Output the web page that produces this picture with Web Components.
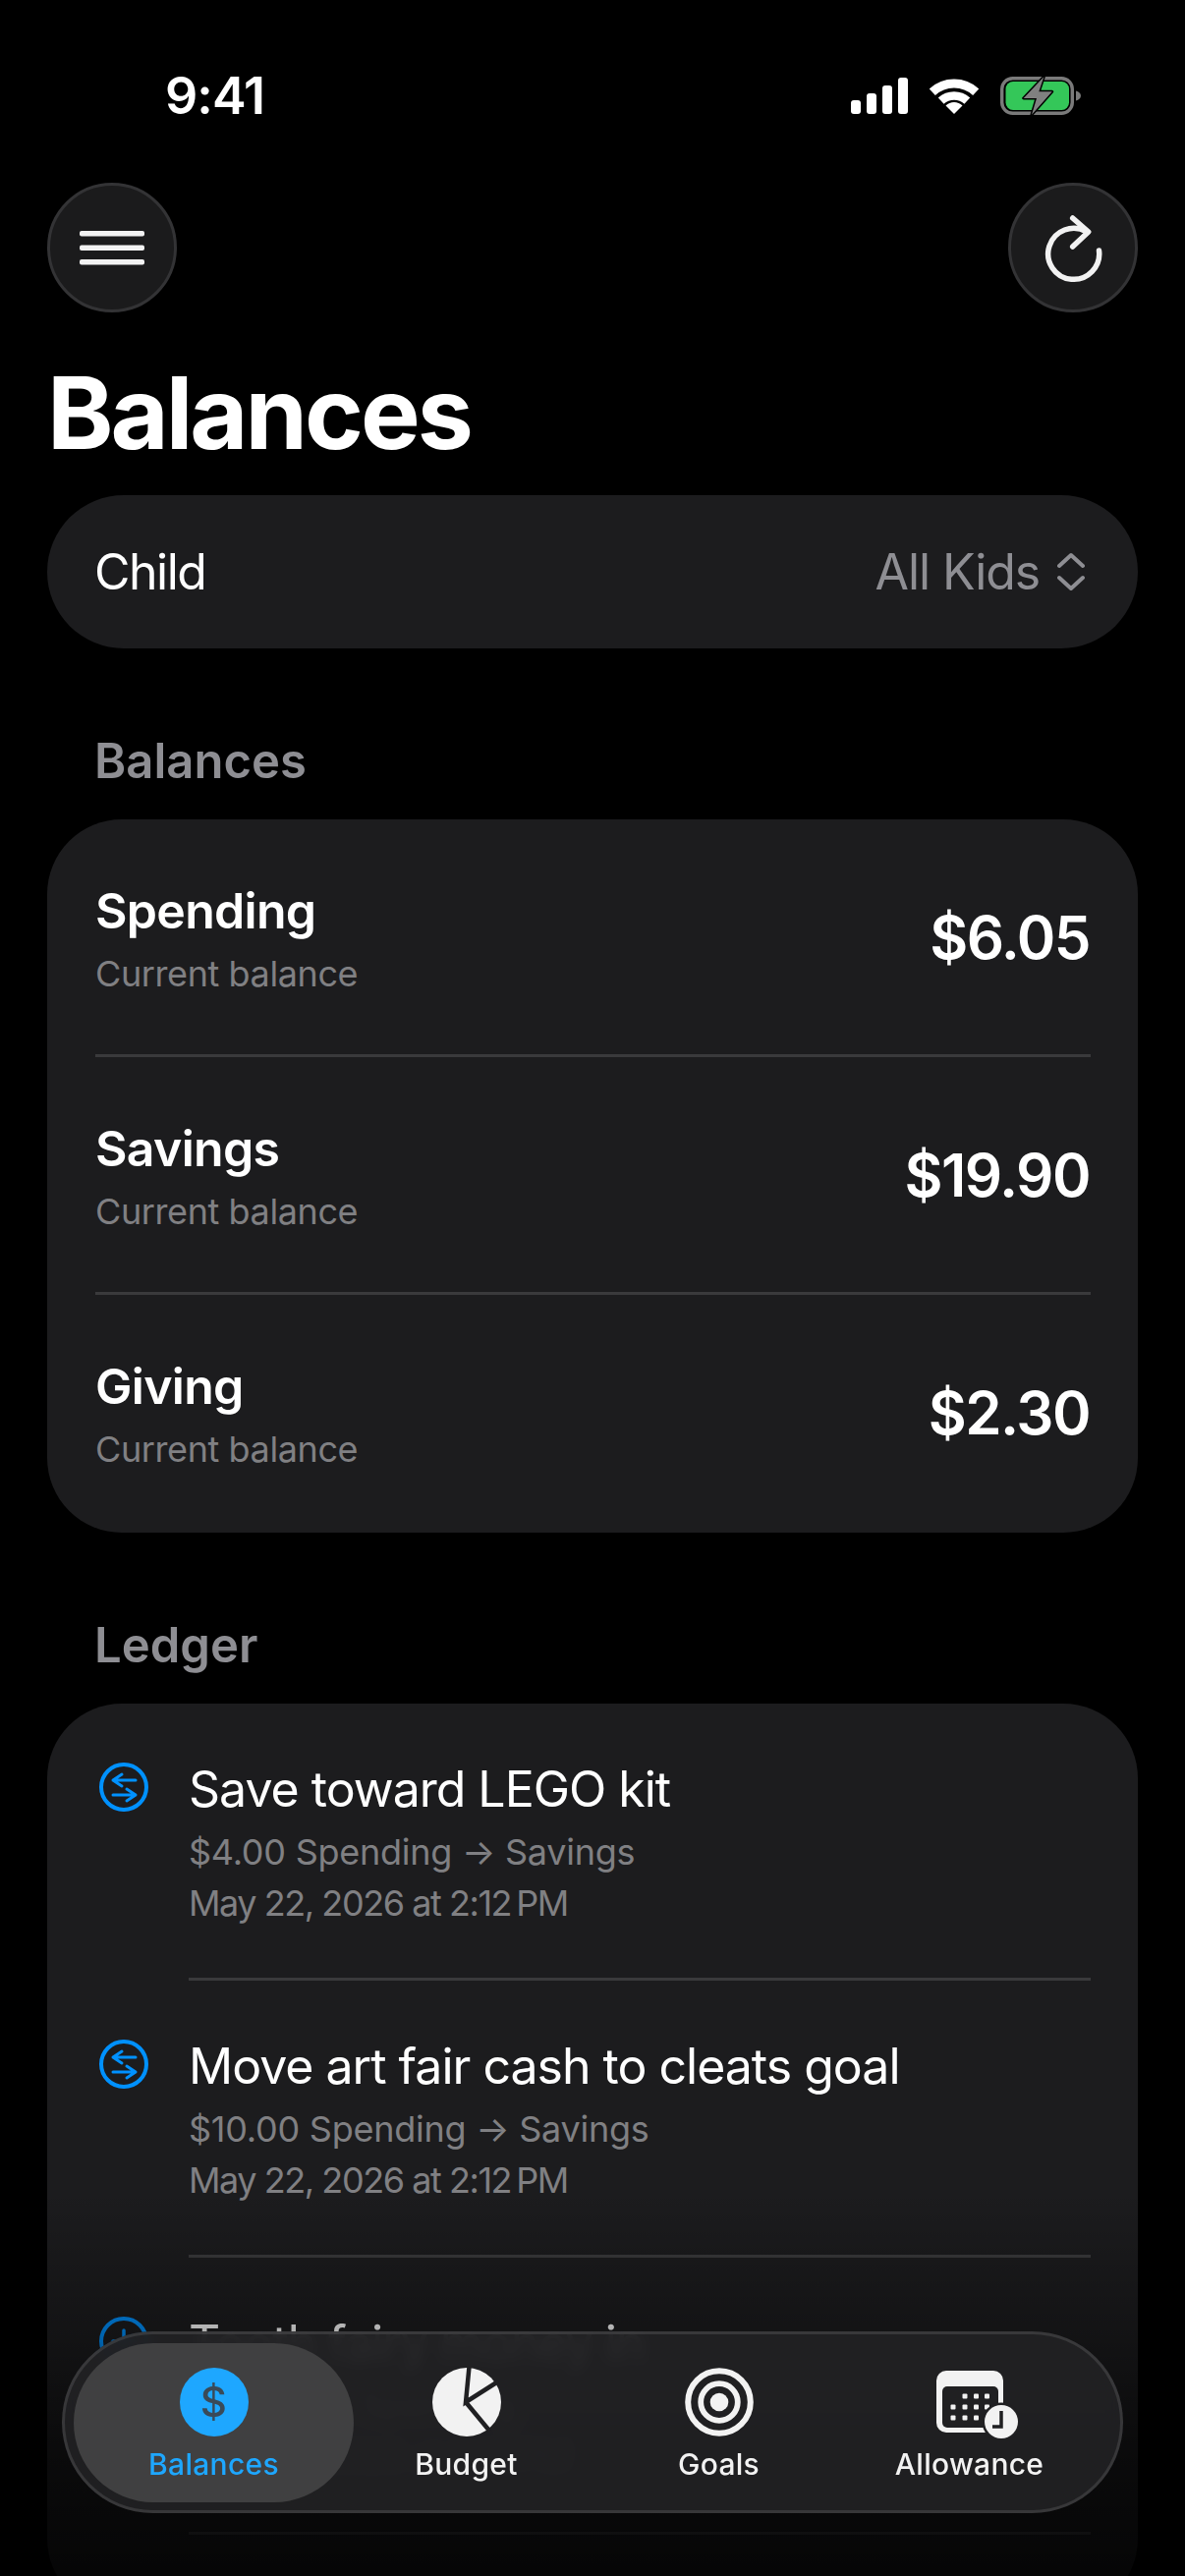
<!doctype html>
<html lang="en"><head><meta charset="utf-8"><title>Balances</title>
<style>
html,body{margin:0;background:#000}
body{font-family:Inter,"Liberation Sans",sans-serif;color:#fff}
svg{display:block}
</style></head><body>
<app-shell>
  <status-bar time="9:41">
    <span slot="time">9:41</span>
    <svg slot="icons" width="58" height="38" viewBox="0 0 58 38" fill="#fff" style="margin-top:1px"><rect x="0" y="23" width="10" height="14" rx="3"/><rect x="16" y="16" width="10" height="21" rx="3"/><rect x="32" y="8" width="10" height="29" rx="3"/><rect x="48" y="0" width="10" height="37" rx="3"/></svg>
    <svg slot="icons" width="50" height="38" viewBox="0 0 50 38" fill="none" stroke="#fff" style="margin-top:1px"><path d="M2.8 14.8A32.5 32.5 0 0 1 47.2 14.8" stroke-width="9"/><path d="M11.7 23.7A19.5 19.5 0 0 1 38.3 23.7" stroke-width="8.5"/><path d="M25 37 16.5 28.5A12 12 0 0 1 33.5 28.5Z" fill="#fff" stroke="none"/></svg>
    <svg slot="icons" width="82" height="40" viewBox="0 0 82 40"><rect x="1.7" y="1.7" width="71.6" height="35.6" rx="11" fill="none" stroke="#7a7a7a" stroke-width="3.4"/><rect x="5.5" y="5" width="64.500" height="29" rx="7.500" fill="#34c759"/><path d="M77 14.500C80 15.500 82 17 82 19.500S80 23.500 77 24.500Z" fill="#7a7a7a"/><path d="M44.300 .3 23.700 22H37L32 38.700 52.700 15.300H39.300Z" fill="#808080" stroke="#000" stroke-width="3" stroke-linejoin="round" paint-order="stroke"/></svg>
  </status-bar>
  <top-nav>
    <circle-button slot="left"><svg width="66" height="36" viewBox="0 0 66 36" fill="#f2f2f2"><rect x="0" y="1" width="66" height="5.500" rx="2"/><rect x="0" y="15.500" width="66" height="5.500" rx="2"/><rect x="0" y="30" width="66" height="5.500" rx="2"/></svg></circle-button>
    <circle-button slot="right"><svg width="126" height="126" viewBox="1 0 126 126" fill="none" stroke="#f2f2f2" stroke-width="5.500" stroke-linecap="round" stroke-linejoin="round"><path d="M90.500 66A26 26 0 1 1 78 47"/><path d="M63.700 33 79.700 47 63.700 62"/></svg></circle-button>
  </top-nav>
  <page-title>Balances</page-title>
  <picker-row>
    <span slot="label">Child</span>
    <span slot="value">All Kids</span>
    <svg slot="icon" width="28" height="40" viewBox="0 0 28 40" fill="none" stroke="#8e8e93" stroke-width="4" stroke-linecap="round" stroke-linejoin="round"><path d="M2 14 14 3 26 14"/><path d="M2 26 14 37 26 26"/></svg>
  </picker-row>
  <section-label>Balances</section-label>
  <group-card>
    <balance-row><span slot="name">Spending</span><span slot="note">Current balance</span><span slot="amount">$6.05</span></balance-row>
    <balance-row><span slot="name">Savings</span><span slot="note">Current balance</span><span slot="amount">$19.90</span></balance-row>
    <balance-row last><span slot="name">Giving</span><span slot="note">Current balance</span><span slot="amount">$2.30</span></balance-row>
  </group-card>
  <section-label>Ledger</section-label>
  <group-card tall>
    <ledger-row>
      <svg slot="icon" width="52" height="52" viewBox="0 0 52 52" fill="none" stroke="#0091ff" stroke-linecap="round" stroke-linejoin="round"><circle cx="26" cy="26" r="23" stroke-width="4"/><path d="M38 19H15M24 13 15 19 24 25" stroke-width="3"/><path d="M15 34H38M29 28 38 34 29 40" stroke-width="3"/></svg>
      <span slot="title">Save toward LEGO kit</span><span slot="sub">$4.00 Spending → Savings</span><span slot="date">May 22, 2026 at 2:12&#8239;PM</span>
    </ledger-row>
    <ledger-row>
      <svg slot="icon" width="52" height="52" viewBox="0 0 52 52" fill="none" stroke="#0091ff" stroke-linecap="round" stroke-linejoin="round"><circle cx="26" cy="26" r="23" stroke-width="4"/><path d="M38 19H15M24 13 15 19 24 25" stroke-width="3"/><path d="M15 34H38M29 28 38 34 29 40" stroke-width="3"/></svg>
      <span slot="title">Move art fair cash to cleats goal</span><span slot="sub">$10.00 Spending → Savings</span><span slot="date">May 22, 2026 at 2:12&#8239;PM</span>
    </ledger-row>
    <ledger-row>
      <svg slot="icon" width="52" height="52" viewBox="0 0 52 52" fill="none" stroke="#0091ff" stroke-linecap="round"><circle cx="26" cy="26" r="23" stroke-width="4"/><path d="M26 15V37M15 26H37" stroke-width="3.500"/></svg>
      <span slot="title">Tooth fairy money in</span><span slot="sub">+$2.00 to Spending</span><span slot="date">May 22, 2026 at 2:12&#8239;PM</span>
    </ledger-row>
  </group-card>
  <fade-veil></fade-veil>
  <tab-bar>
    <tab-item active>
      <span slot="icon" class="dollar" style="width:70px;height:70px;border-radius:50%;background:#1ea7ff;color:#3a4a58;display:flex;align-items:center;justify-content:center;font-size:42px;line-height:70px">$</span>
      Balances
    </tab-item>
    <tab-item>
      <svg slot="icon" width="70" height="70" viewBox="0 0 70 70"><circle cx="35" cy="35" r="35" fill="#f2f2f2"/><path d="M37.500 -1 34 35 67 14M34 35 58 64" fill="none" stroke="#202022" stroke-width="4.500"/></svg>
      Budget
    </tab-item>
    <tab-item>
      <svg slot="icon" width="70" height="70" viewBox="0 0 70 70" fill="none" stroke="#f2f2f2"><circle cx="35" cy="35" r="31.800" stroke-width="6"/><circle cx="35" cy="35" r="18.800" stroke-width="5.800"/><circle cx="35" cy="35" r="9.300" fill="#f2f2f2" stroke="none"/></svg>
      Goals
    </tab-item>
    <tab-item offset>
      <svg slot="icon" width="84" height="74" viewBox="0 0 84 74" style="margin-left:17px;margin-bottom:-4px"><rect x="0" y="3" width="68" height="63" rx="10" fill="#f2f2f2"/><path d="M11 19H58A5 5 0 0 1 63 24V56A5 5 0 0 1 58 61H11A5 5 0 0 1 6 56V24A5 5 0 0 1 11 19Z" fill="#202022"/><g fill="#f2f2f2"><rect x="26.500" y="26.500" width="5" height="5" rx="1"/><rect x="38" y="26.500" width="5" height="5" rx="1"/><rect x="49" y="26.500" width="5" height="5" rx="1"/><rect x="14.500" y="37.500" width="5" height="5" rx="1"/><rect x="26.500" y="37.500" width="5" height="5" rx="1"/><rect x="38" y="37.500" width="5" height="5" rx="1"/><rect x="49" y="37.500" width="5" height="5" rx="1"/><rect x="14.500" y="48.500" width="5" height="5" rx="1"/><rect x="26.500" y="48.500" width="5" height="5" rx="1"/><rect x="38" y="48.500" width="5" height="5" rx="1"/></g><circle cx="66" cy="55" r="19.500" fill="#202022"/><circle cx="66" cy="55" r="17" fill="#f2f2f2"/><path d="M66 44V60H57" fill="none" stroke="#202022" stroke-width="3.500"/></svg>
      Allowance
    </tab-item>
  </tab-bar>
</app-shell>
<script>
function def(name, html){
  const t=document.createElement('template');t.innerHTML=html;
  customElements.define(name,class extends HTMLElement{
    constructor(){super();this.attachShadow({mode:'open'}).appendChild(t.content.cloneNode(true));}
  });
}
def('app-shell',`<style>:host{display:block;position:relative;box-sizing:border-box;width:1206px;height:2622px;overflow:hidden;background:#000;padding:0 48px;color:#fff;font-family:Inter,"Liberation Sans",sans-serif}</style><slot></slot>`);
def('status-bar',`<style>
:host{display:flex;height:186px;box-sizing:border-box;padding:72px 58px 0 120px;align-items:flex-start}
.t{font-size:52px;line-height:52px;font-weight:600;letter-spacing:-.9px}
.i{margin-left:auto;display:flex;gap:22px;margin-top:6px}
</style><div class="t"><slot name="time"></slot></div><div class="i"><slot name="icons"></slot></div>`);
def('top-nav',`<style>:host{display:flex;justify-content:space-between;height:132px}</style><slot name="left"></slot><slot name="right"></slot>`);
def('circle-button',`<style>:host{display:flex;align-items:center;justify-content:center;box-sizing:border-box;width:132px;height:132px;border-radius:50%;background:#1b1b1c;border:3px solid #333335}</style><slot></slot>`);
def('page-title',`<style>:host{display:block;box-sizing:border-box;height:186px;padding:51px 0 0 0;font-size:102px;line-height:102px;font-weight:700;letter-spacing:-3px}</style><slot></slot>`);
def('picker-row',`<style>
:host{display:flex;align-items:center;box-sizing:border-box;height:156px;border-radius:78px;background:#1c1c1e;padding:0 54px 0 48px;font-size:50px;line-height:60px;letter-spacing:-1.5px}
.v{margin-left:auto;color:#8e8e93;letter-spacing:-1.1px;margin-right:18px}
</style><slot name="label"></slot><span class="v"><slot name="value"></slot></span><slot name="icon"></slot>`);
def('section-label',`<style>:host{display:block;box-sizing:border-box;height:174px;padding:86px 0 0 48px;font-size:49px;line-height:58px;font-weight:600;color:#8e8e93}</style><slot></slot>`);
def('group-card',`<style>:host{display:block;background:#1c1c1e;border-radius:76px}:host([tall]){padding-bottom:80px}</style><slot></slot>`);
def('balance-row',`<style>
:host{display:flex;align-items:center;justify-content:space-between;box-sizing:border-box;height:242px;margin:0 48px 0 49px;border-bottom:3px solid #3a3a3c}
:host([last]){border-bottom-color:transparent}
.n{font-size:50px;line-height:60px;font-weight:600;letter-spacing:-.7px;margin-bottom:12px}
.s{font-size:36px;line-height:44px;color:#808083;letter-spacing:-.4px}
.a{font-size:60px;line-height:72px;font-weight:600;letter-spacing:-1.5px;margin-right:1px}
.l{margin-top:3px}
</style><div class="l"><div class="n"><slot name="name"></slot></div><div class="s"><slot name="note"></slot></div></div><div class="a"><slot name="amount"></slot></div>`);
def('ledger-row',`<style>
:host{display:grid;grid-template-columns:52px 1fr;column-gap:40px;box-sizing:border-box;height:282px;margin:0 48px 0 52px;}
.i{padding-top:59px}
.b{border-bottom:3px solid #3a3a3c;padding-top:57px;box-sizing:border-box;height:282px}
.t{font-size:50px;line-height:60px;letter-spacing:-1px;margin-bottom:12px;white-space:nowrap}
.s,.d{font-size:36px;line-height:44px;color:#808083;white-space:nowrap}
.s{letter-spacing:-.25px;margin-bottom:8px}
.d{letter-spacing:-1.45px}
</style><div class="i"><slot name="icon"></slot></div><div class="b"><div class="t"><slot name="title"></slot></div><div class="s"><slot name="sub"></slot></div><div class="d"><slot name="date"></slot></div></div>`);
def('fade-veil',`<style>:host{display:block;position:absolute;left:0;right:0;bottom:0;height:392px;background:linear-gradient(rgba(0,0,0,0),rgba(0,0,0,.3) 36%,rgba(0,0,0,.6) 65%,rgba(0,0,0,.8));pointer-events:none}</style>`);
def('tab-bar',`<style>:host{display:flex;position:absolute;left:63px;top:2373px;width:1080px;height:185px;box-sizing:border-box;padding-left:23px;border-radius:92.5px;background:rgba(33,33,35,.93);border:3px solid rgba(255,255,255,.11);-webkit-backdrop-filter:blur(7px);backdrop-filter:blur(7px);isolation:isolate}</style><slot></slot>`);
def('tab-item',`<style>
:host{display:flex;flex-direction:column;align-items:center;position:relative;box-sizing:border-box;width:257px;padding-top:34px;font-size:30px;line-height:36px;font-weight:500;letter-spacing:.3px;color:#f2f2f2}
:host([offset]){margin-left:-2px}
:host([active]){color:#1ea7ff}
:host([active])::before{content:"";position:absolute;z-index:-1;left:-14px;top:9px;width:285px;height:162px;border-radius:81px;background:#404041}
.ic{height:70px;margin-bottom:10px;display:block}
</style><div class="ic"><slot name="icon"></slot></div><slot></slot>`);
</script>
</body></html>
